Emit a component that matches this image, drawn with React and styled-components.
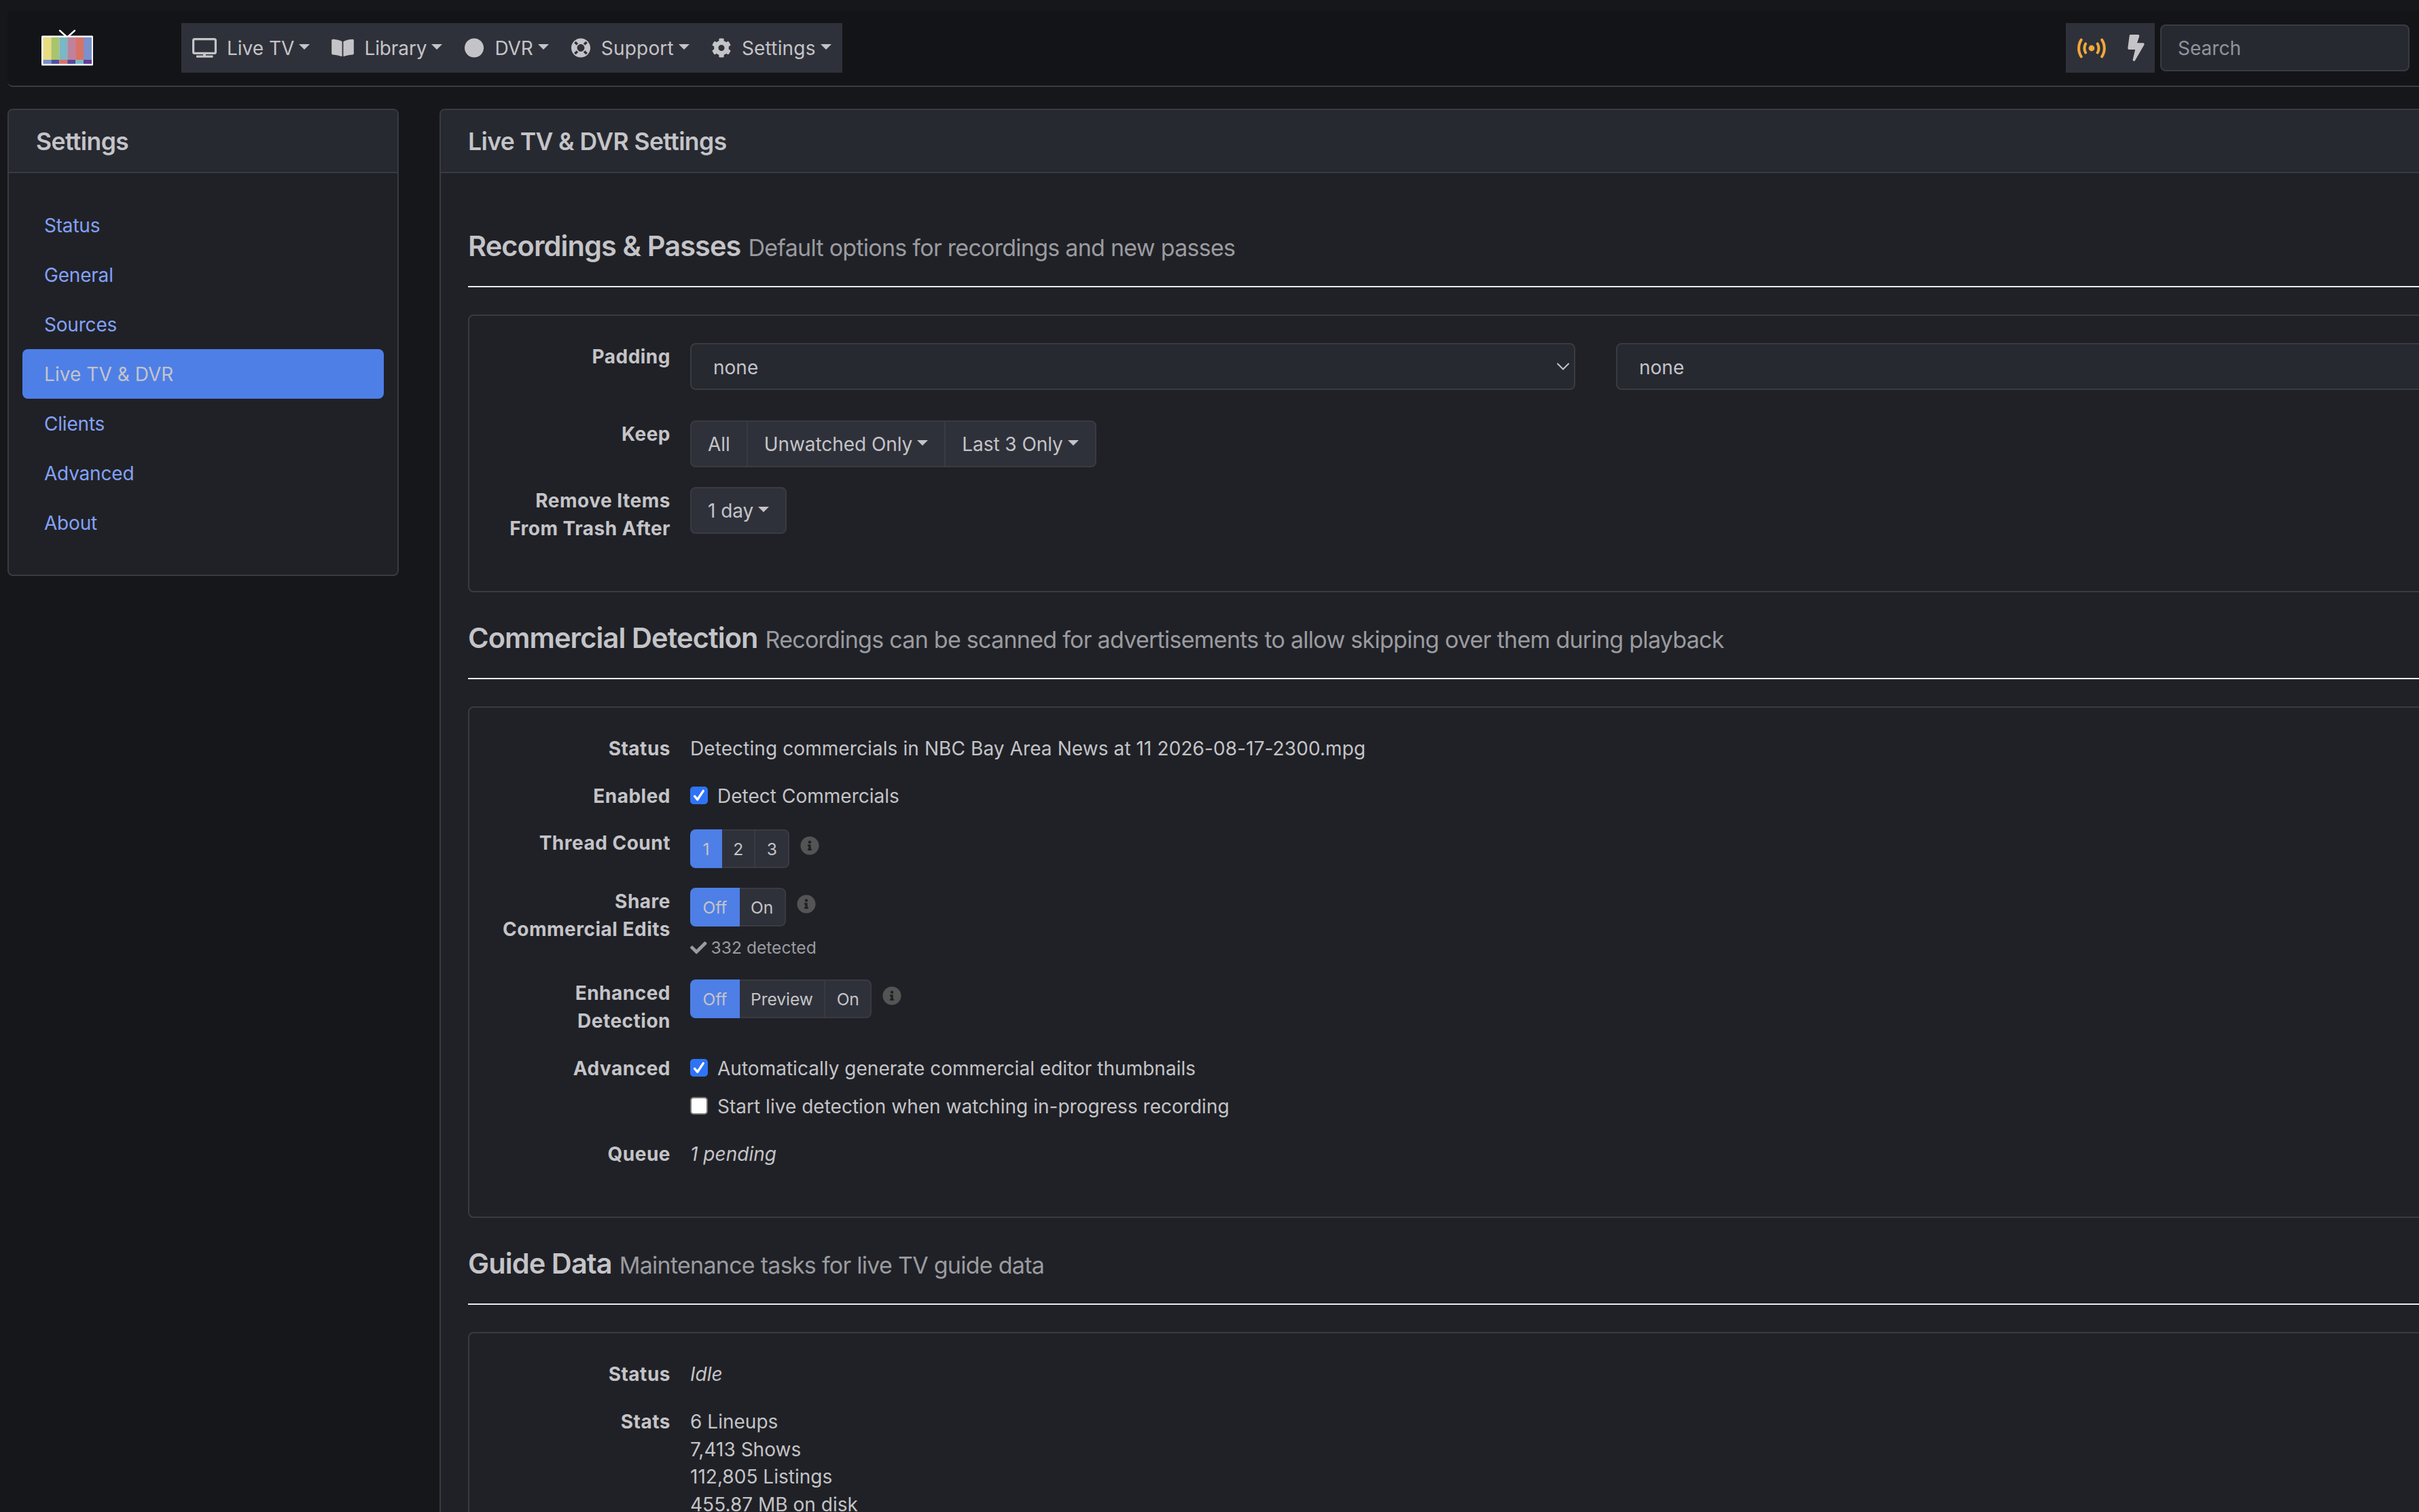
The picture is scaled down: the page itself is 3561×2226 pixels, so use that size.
import React, { useState } from 'react'
import styled, { createGlobalStyle, css } from 'styled-components'
import { FaBolt, FaBookOpen, FaCheck, FaCircle, FaCog, FaInfoCircle, FaLifeRing } from 'react-icons/fa'

const colors = {
  page: '#16171b',
  navbar: '#131418',
  card: '#202126',
  header: '#272931',
  control: '#2f313a',
  border: '#393b41',
  rule: '#ececf0',
  text: '#c4c4c8',
  muted: '#9a9ba0',
  link: '#83a1fb',
  primary: '#4e7fe7',
  check: '#2f74f6',
  info: '#545454',
  warning: '#f1a83a',
}

const GlobalStyle = createGlobalStyle`
  *, *::before, *::after {
    box-sizing: border-box;
  }

  body {
    margin: 0;
    background: ${colors.page};
    color: ${colors.text};
    font-family: Inter, "Liberation Sans", sans-serif;
    font-size: 28px;
    line-height: 40.8px;
    letter-spacing: 0.02px;
    overflow: hidden;
  }

  button, input {
    font: inherit;
    letter-spacing: inherit;
    color: inherit;
  }
`

const Viewport = styled.div`
  height: 2226px;
  overflow: hidden;
`

/* the window is narrower than the page, so the right part is cut off */
const Page = styled.div`
  width: 3800px;
  padding: 15px 11px 0;
`

const Navbar = styled.nav`
  display: flex;
  align-items: center;
  height: 113px;
  padding: 0 242px 0 50px;
  background: ${colors.navbar};
  border-bottom: 2px solid ${colors.border};
  border-radius: 8px;
`

const Logo = styled.svg`
  width: 76px;
  height: 54px;
  margin: 0 130px 2px 0;
`

const NavGroup = styled.div`
  display: flex;
  align-items: center;
  height: 73px;
  background: ${colors.control};
`

const NavItem = styled.a`
  display: flex;
  align-items: center;
  padding: 1px 16px 0;
  letter-spacing: ${props => props.$track}px;
`

const NavIcon = styled.span`
  display: flex;
  width: ${props => props.$width}px;
  margin-right: 15px;

  svg {
    width: 100%;
    height: 29px;
  }
`

const Caret = styled.span`
  display: inline-block;
  margin-left: 7px;
  margin-bottom: ${props => (props.$raised ? '5px' : '3px')};
  border-top: 8px solid;
  border-left: 8px solid transparent;
  border-right: 8px solid transparent;
`

const Tools = styled(NavGroup)`
  gap: 24px;
  width: 131px;
  margin-left: auto;
  padding-left: 16px;
`

const Search = styled.input`
  width: 367px;
  height: 69px;
  margin-left: 8px;
  padding: 0 24px;
  background: ${colors.header};
  border: 2px solid ${colors.border};
  border-radius: 8px;

  &::placeholder {
    color: #92949b;
    opacity: 1;
  }
`

const Columns = styled.div`
  display: flex;
  align-items: flex-start;
  gap: 60px;
  margin-top: 32px;
`

const Card = styled.section`
  flex: ${props => (props.$width ? `0 0 ${props.$width}px` : '1')};
  background: ${colors.card};
  border: 2px solid ${colors.border};
  border-radius: 8px;
`

const CardHeader = styled.h1`
  display: flex;
  align-items: center;
  height: 93px;
  margin: 0;
  padding: 3px 40px 0;
  background: ${colors.header};
  border-bottom: 2px solid ${colors.border};
  border-radius: 6px 6px 0 0;
  font-size: 35.5px;
  font-weight: 560;
  letter-spacing: -0.57px;
`

const Menu = styled.div`
  display: flex;
  flex-direction: column;
  padding: 40px 20px 40px;
`

const MenuLink = styled.a`
  padding: 16.7px 32px 15.5px;
  border-radius: 8px;
  color: ${colors.link};
  letter-spacing: -0.2px;

  ${({ $active }) =>
    $active &&
    css`
      background: ${colors.primary};
      color: ${colors.text};
      letter-spacing: 0.05px;
    `}
`

const Body = styled.div`
  padding: 82px 40px;
`

const SectionTitle = styled.h2`
  display: flex;
  align-items: baseline;
  height: 86px;
  margin: 0 0 40px;
  border-bottom: 2px solid ${colors.rule};
  font-size: 41.5px;
  font-weight: 560;
  line-height: 50px;
  letter-spacing: -0.9px;
`

const Subtitle = styled.small`
  margin-left: 11px;
  color: ${colors.muted};
  font-size: 34px;
  font-weight: 400;
  letter-spacing: -0.73px;
`

const Panel = styled.div`
  margin-bottom: 42px;
  padding: 40px 40px 42.3px;
  border: 2px solid ${colors.border};
  border-radius: 8px;
`

const Row = styled.div`
  display: flex;
  align-items: flex-start;
  margin-bottom: ${props => props.$gap || 29}px;
`

const Label = styled.div`
  flex: 0 0 256px;
  margin-right: 29px;
  font-weight: 700;
  letter-spacing: 0.5px;
  text-align: right;
  white-space: pre;
`

const Field = styled.div`
  flex: 1;
`

const Filename = styled.span`
  letter-spacing: 0.09px;
`

const Inline = styled.div`
  display: flex;
  align-items: flex-start;
`

const Selects = styled.div`
  display: flex;
  gap: 60px;
`

const SelectBox = styled.div`
  display: flex;
  align-items: center;
  justify-content: space-between;
  width: 1303px;
  height: 69px;
  padding: 3px 6px 0 32px;
  background: ${colors.header};
  border: 2px solid ${colors.border};
  border-radius: 8px;

  svg {
    width: 20px;
    height: 12px;
    margin-bottom: 3px;
  }
`

const ButtonGroup = styled.div`
  display: inline-flex;
  vertical-align: top;
`

const Button = styled.button`
  display: flex;
  align-items: center;
  height: ${props => (props.$small ? 57 : 69)}px;
  margin: 0 0 0 -2px;
  padding: 1px ${props => (props.$small ? 16.4 : 24)}px 0;
  background: ${colors.control};
  border: 2px solid ${colors.border};
  letter-spacing: -0.06px;
  white-space: nowrap;

  ${({ $small }) =>
    $small &&
    css`
      font-size: 24.6px;
    `}

  ${({ $active }) =>
    $active &&
    css`
      position: relative;
      background: ${colors.primary};
      border-color: ${colors.primary};
    `}

  &:first-child {
    margin-left: 0;
    border-top-left-radius: 8px;
    border-bottom-left-radius: 8px;
  }

  &:last-child {
    border-top-right-radius: 8px;
    border-bottom-right-radius: 8px;
  }
`

const Info = styled(FaInfoCircle)`
  width: 28px;
  height: 28px;
  margin: 10px 0 0 16px;
  color: ${colors.info};
`

const Detected = styled.div`
  display: flex;
  align-items: center;
  gap: 6px;
  height: 36px;
  margin-top: 13px;
  color: ${colors.muted};
  font-size: 24.6px;
  letter-spacing: 0;
`

const CheckLabel = styled.label`
  display: flex;
  align-items: flex-start;
  gap: 14px;

  & + & {
    margin-top: 15.2px;
  }
`

const Box = styled.span`
  display: flex;
  align-items: center;
  justify-content: center;
  width: 26px;
  height: 26px;
  margin-top: 6px;
  background: ${props => (props.$checked ? colors.check : '#fff')};
  border: ${props => (props.$checked ? 'none' : '2px solid #767676')};
  border-radius: 5px;
`

const TvLogo = () => (
  <Logo viewBox='0 0 76 54'>
    <path d='M27 2l11 10L49 2' fill='none' stroke='#fff' strokeWidth='2.4' strokeLinecap='round' />
    <rect y='9.5' width='76' height='44' rx='1.5' fill='#fff' />
    {['#e9dc80', '#a9c46b', '#79b8c5', '#bd839d', '#d87267', '#7b91c9'].map((fill, i) => (
      <rect key={fill} x={2.5 + i * 11.9} y='12' width='12' height='33' fill={fill} />
    ))}
    {['#7b91c9', '#4f51a1', '#d87267', '#544b9f', '#79b8c5', '#613f98'].map((fill, i) => (
      <rect key={fill} x={2.5 + i * 11.9} y='45' width='12' height='6' fill={fill} />
    ))}
  </Logo>
)

const DesktopIcon = () => (
  <svg viewBox='0 0 36 29'>
    <rect x='1.6' y='1.6' width='32.8' height='20.8' rx='2' fill='none' stroke='currentColor' strokeWidth='3.2' />
    <path d='M16 23h4v3h-4zM6 25.6h24.5v3.2H6z' fill='currentColor' />
  </svg>
)

const BroadcastIcon = () => (
  <svg width='44' height='30' viewBox='0 0 44 30' fill='none' stroke={colors.warning} strokeWidth='4' strokeLinecap='round'>
    <path d='M6.8 2.6a23 23 0 0 0 0 24.8M37.2 2.6a23 23 0 0 1 0 24.8M13.2 8.4a14 14 0 0 0 0 13.2M30.8 8.4a14 14 0 0 1 0 13.2' />
    <circle cx='22' cy='15' r='4.4' fill={colors.warning} stroke='none' />
  </svg>
)

const Chevron = () => (
  <svg viewBox='0 0 20 12' fill='none' stroke='currentColor' strokeWidth='2' strokeLinecap='round'>
    <path d='M2 1.5l8 8 8-8' />
  </svg>
)

const Checkmark = () => (
  <svg width='20' height='20' viewBox='0 0 20 20' fill='none' stroke='#fff' strokeWidth='3.4' strokeLinecap='round' strokeLinejoin='round'>
    <path d='M3.5 11.2l4.2 5L16.3 3.4' />
  </svg>
)

const navItems = [
  { label: 'Live TV', icon: <DesktopIcon />, width: 36, track: 0 },
  { label: 'Library', icon: <FaBookOpen />, width: 33, track: -0.1 },
  { label: 'DVR', icon: <FaCircle />, width: 30, track: -0.1 },
  { label: 'Support', icon: <FaLifeRing />, width: 30, track: 0.2 },
  { label: 'Settings', icon: <FaCog />, width: 30, track: 0.2 },
]

const menuItems = ['Status', 'General', 'Sources', 'Live TV & DVR', 'Clients', 'Advanced', 'About']

const Section = ({ title, subtitle, children }) => (
  <>
    <SectionTitle>
      {title}
      <Subtitle>{subtitle}</Subtitle>
    </SectionTitle>
    <Panel>{children}</Panel>
  </>
)

const FormRow = ({ label, gap, children }) => (
  <Row $gap={gap}>
    <Label>{label}</Label>
    <Field>{children}</Field>
  </Row>
)

const Select = ({ value }) => (
  <SelectBox>
    {value}
    <Chevron />
  </SelectBox>
)

const Choice = ({ options, initial }) => {
  const [value, setValue] = useState(initial)

  return (
    <Inline>
      <ButtonGroup>
        {options.map(option => (
          <Button key={option} $small $active={option === value} onClick={() => setValue(option)}>
            {option}
          </Button>
        ))}
      </ButtonGroup>
      <Info />
    </Inline>
  )
}

const Check = ({ initial, children }) => {
  const [checked, setChecked] = useState(initial)

  return (
    <CheckLabel onClick={() => setChecked(!checked)}>
      <Box $checked={checked}>{checked && <Checkmark />}</Box>
      {children}
    </CheckLabel>
  )
}

const App = () => (
  <Viewport>
    <GlobalStyle />
    <Page>
      <Navbar>
        <TvLogo />
        <NavGroup>
          {navItems.map(item => (
            <NavItem key={item.label} $track={item.track}>
              <NavIcon $width={item.width}>{item.icon}</NavIcon>
              {item.label}
              <Caret />
            </NavItem>
          ))}
        </NavGroup>
        <Tools>
          <BroadcastIcon />
          <FaBolt size={39} color={colors.text} />
        </Tools>
        <Search placeholder='Search' />
      </Navbar>

      <Columns>
        <Card $width={576}>
          <CardHeader>Settings</CardHeader>
          <Menu>
            {menuItems.map(item => (
              <MenuLink key={item} $active={item === 'Live TV & DVR'}>
                {item}
              </MenuLink>
            ))}
          </Menu>
        </Card>

        <Card>
          <CardHeader>Live TV &amp; DVR Settings</CardHeader>
          <Body>
            <Section title='Recordings & Passes' subtitle='Default options for recordings and new passes'>
              <FormRow label='Padding' gap={45}>
                <Selects>
                  <Select value='none' />
                  <Select value='none' />
                </Selects>
              </FormRow>
              <FormRow label='Keep'>
                <ButtonGroup>
                  <Button>All</Button>
                  <Button>
                    Unwatched Only
                    <Caret $raised />
                  </Button>
                  <Button>
                    Last 3 Only
                    <Caret $raised />
                  </Button>
                </ButtonGroup>
              </FormRow>
              <FormRow label={'Remove Items\nFrom Trash After'}>
                <ButtonGroup>
                  <Button>
                    1 day
                    <Caret $raised />
                  </Button>
                </ButtonGroup>
              </FormRow>
            </Section>

            <Section
              title='Commercial Detection'
              subtitle='Recordings can be scanned for advertisements to allow skipping over them during playback'
            >
              <FormRow label='Status'>
                <Filename>Detecting commercials in NBC Bay Area News at 11 2026-08-17-2300.mpg</Filename>
              </FormRow>
              <FormRow label='Enabled'>
                <Check initial>Detect Commercials</Check>
              </FormRow>
              <FormRow label='Thread Count'>
                <Choice options={['1', '2', '3']} initial='1' />
              </FormRow>
              <FormRow label={'Share\nCommercial Edits'}>
                <Choice options={['Off', 'On']} initial='Off' />
                <Detected>
                  <FaCheck />
                  332 detected
                </Detected>
              </FormRow>
              <FormRow label={'Enhanced\nDetection'}>
                <Choice options={['Off', 'Preview', 'On']} initial='Off' />
              </FormRow>
              <FormRow label='Advanced'>
                <Check initial>Automatically generate commercial editor thumbnails</Check>
                <Check>Start live detection when watching in-progress recording</Check>
              </FormRow>
              <FormRow label='Queue'>
                <em>1 pending</em>
              </FormRow>
            </Section>

            <Section title='Guide Data' subtitle='Maintenance tasks for live TV guide data'>
              <FormRow label='Status'>
                <em>Idle</em>
              </FormRow>
              <FormRow label='Stats'>
                <div>6 Lineups</div>
                <div>7,413 Shows</div>
                <div>112,805 Listings</div>
                <div>455.87 MB on disk</div>
              </FormRow>
            </Section>
          </Body>
        </Card>
      </Columns>
    </Page>
  </Viewport>
)

export default App
